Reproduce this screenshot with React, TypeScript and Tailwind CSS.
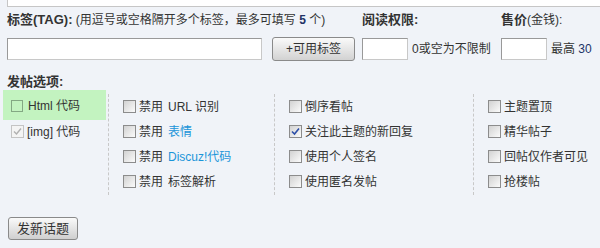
import React from "react";

const font = {
  fontFamily: '"Liberation Sans", "Noto Sans CJK SC", sans-serif',
};

type BoxKind = "plain" | "checked" | "disabled" | "green";

const Box = ({ kind = "plain" }: { kind?: BoxKind }) => {
  if (kind === "green") {
    return <span className="inline-block w-[12px] h-[12px] border border-[#83a883] shrink-0" />;
  }
  if (kind === "disabled") {
    return (
      <span className="inline-flex items-center justify-center w-[13px] h-[13px] border border-[#c4c4c4] bg-[#f4f4f4] shrink-0">
        <svg width="9" height="9" viewBox="0 0 9 9">
          <path d="M1 4.5 L3.5 7 L8 1.5" fill="none" stroke="#b0b0b0" strokeWidth="1.4" />
        </svg>
      </span>
    );
  }
  return (
    <span className="inline-flex items-center justify-center w-[13px] h-[13px] border border-[#8c8c8c] bg-gradient-to-br from-[#d2d2d2] to-[#fbfbfb] shrink-0">
      {kind === "checked" && (
        <svg width="9" height="9" viewBox="0 0 9 9">
          <path d="M1 4.5 L3.5 7 L8 1.5" fill="none" stroke="#2d4fa8" strokeWidth="1.6" />
        </svg>
      )}
    </span>
  );
};

const Row = ({ kind, children }: { kind?: BoxKind; children: React.ReactNode }) => (
  <div className="h-[25px] flex items-center gap-[3px] whitespace-nowrap">
    <Box kind={kind} />
    <span>{children}</span>
  </div>
);

const Blue = ({ children }: { children: React.ReactNode }) => (
  <span className="text-[#1b95d8]">{children}</span>
);

export default function App() {
  return (
    <div className="w-[600px] h-[248px] bg-[#f0f3f8] text-[12px] text-[#333] overflow-hidden" style={font}>
      <div className="ml-[7px] h-[7px] bg-white border-l border-b border-[#c6c6c6]" />
      <div className="px-[7px]">
        {/* top fields */}
        <div className="flex mt-[5px]">
          <div className="w-[348px] shrink-0">
            <div className="leading-[16px] whitespace-nowrap">
              <b className="text-[13px]">标签(TAG):</b> (用逗号或空格隔开多个标签，最多可填写{" "}
              <b className="text-[#223366]">5</b> 个)
            </div>
            <div className="flex items-center mt-[9px]">
              <div className="w-[255px] h-[22px] bg-white border border-[#c8c8c8] border-t-[#999] border-l-[#999]" />
              <button className="ml-[10px] w-[83px] h-[24px] rounded-[3px] border border-[#8a8a8a] bg-gradient-to-b from-[#fafafa] to-[#d2d2d2] text-[12px] text-[#333]">
                +可用标签
              </button>
            </div>
          </div>
          <div className="w-[139px] ml-[7px] shrink-0">
            <div className="leading-[16px]">
              <b className="text-[13px]">阅读权限:</b>
            </div>
            <div className="flex items-center mt-[9px] h-[24px] whitespace-nowrap">
              <div className="w-[46px] h-[22px] bg-white border border-[#c8c8c8] border-t-[#999] border-l-[#999]" />
              <span className="ml-[4px]">0或空为不限制</span>
            </div>
          </div>
          <div className="flex-1 min-w-0">
            <div className="leading-[16px] whitespace-nowrap">
              <b className="text-[13px]">售价</b>(金钱):
            </div>
            <div className="flex items-center mt-[9px] h-[24px] whitespace-nowrap">
              <div className="w-[46px] h-[22px] bg-white border border-[#c8c8c8] border-t-[#999] border-l-[#999] shrink-0" />
              <span className="ml-[4px]">
                最高 <span className="text-[#223366]">30</span>
              </span>
            </div>
          </div>
        </div>

        {/* options */}
        <div className="mt-[13px] leading-[16px]">
          <b className="text-[13px]">发帖选项:</b>
        </div>
        <div className="flex mt-[4px]">
          <div className="w-[101px]">
            <div className="-ml-[4px] w-[103px] h-[30px] -mt-[4px] -mb-[1px] pl-[8px] pt-[1px] flex items-center gap-[5px] bg-[#c3f3c0]">
              <Box kind="green" />
              <span>Html 代码</span>
            </div>
            <div className="pl-[4px]">
              <Row kind="disabled">[img] 代码</Row>
            </div>
          </div>
          <div className="w-[166px] border-l border-dashed border-[#c8c8c8] pl-[14px] h-[101px]">
            <Row>
              禁用<span className="ml-[5px]">URL 识别</span>
            </Row>
            <Row>
              禁用<span className="ml-[5px]"><Blue>表情</Blue></span>
            </Row>
            <Row>
              禁用<span className="ml-[5px]"><Blue>Discuz!代码</Blue></span>
            </Row>
            <Row>
              禁用<span className="ml-[5px]">标签解析</span>
            </Row>
          </div>
          <div className="w-[199px] border-l border-dashed border-[#c8c8c8] pl-[14px] h-[101px]">
            <Row>倒序看帖</Row>
            <Row kind="checked">关注此主题的新回复</Row>
            <Row>使用个人签名</Row>
            <Row>使用匿名发帖</Row>
          </div>
          <div className="flex-1 border-l border-dashed border-[#c8c8c8] pl-[14px] h-[101px]">
            <Row>主题置顶</Row>
            <Row>精华帖子</Row>
            <Row>回帖仅作者可见</Row>
            <Row>抢楼帖</Row>
          </div>
        </div>

        <button className="mt-[22px] ml-[1px] w-[70px] h-[23px] rounded-[3px] border border-[#8a8a8a] bg-gradient-to-b from-[#fafafa] to-[#cfcfcf] text-[13px] text-[#333]">
          发新话题
        </button>
      </div>
    </div>
  );
}
